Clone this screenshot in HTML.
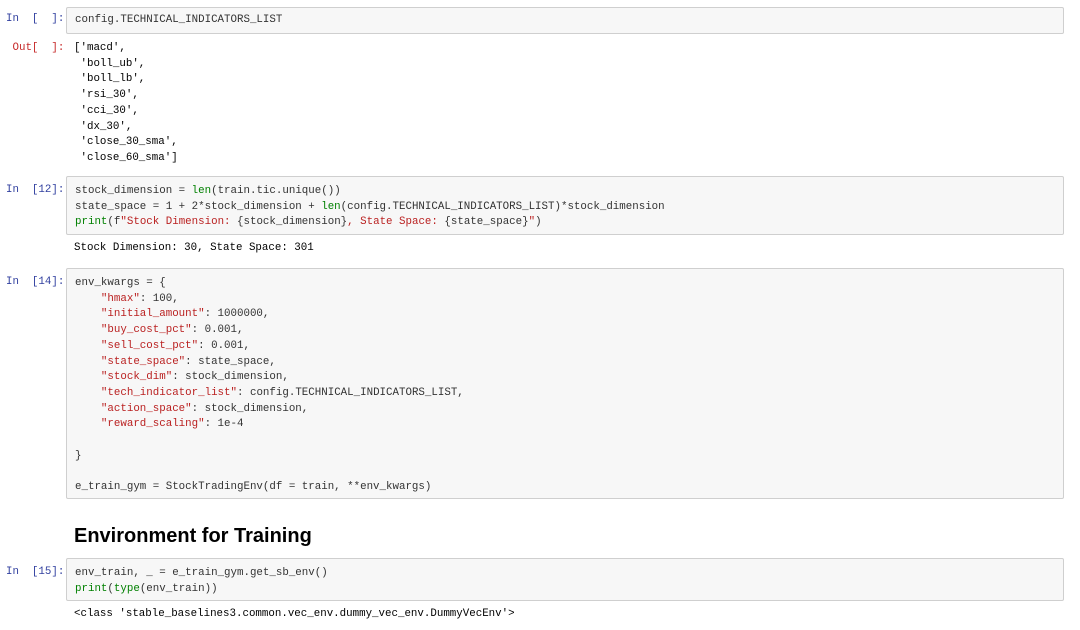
<!DOCTYPE html>
<html><head><meta charset="utf-8"><style>
body{margin:0;background:#fff;width:1080px;height:630px;overflow:hidden;position:relative;font-family:"Liberation Mono",monospace;font-size:10.8px;color:#333}
.p{position:absolute;left:6px;width:60px;color:#303f9f;white-space:pre;line-height:15.7px}
.o{color:#c62828}
.c{position:absolute;left:66px;width:998px;background:#f7f7f7;border:1px solid #cfcfcf;border-radius:2px;box-sizing:border-box;padding:7px 8px 5px;white-space:pre;line-height:15.7px}
.t{position:absolute;left:74px;white-space:pre;line-height:15.7px;color:#000}
.k{color:#008000}.s{color:#ba2121}
h2{position:absolute;left:74px;top:525px;margin:0;font:bold 20px "Liberation Sans",sans-serif;color:#000}
</style></head><body>
<div class="p" style="top:12px">In  [  ]:</div>
<div class="c" style="top:7px;height:27px;padding-top:5px">config.TECHNICAL_INDICATORS_LIST</div>
<div class="p o" style="top:41px"> Out[  ]:</div>
<div class="t" style="top:41px">['macd',
 'boll_ub',
 'boll_lb',
 'rsi_30',
 'cci_30',
 'dx_30',
 'close_30_sma',
 'close_60_sma']</div>
<div class="p" style="top:183px">In  [12]:</div>
<div class="c" style="top:176px;height:59px">stock_dimension = <span class="k">len</span>(train.tic.unique())
state_space = 1 + 2*stock_dimension + <span class="k">len</span>(config.TECHNICAL_INDICATORS_LIST)*stock_dimension
<span class="k">print</span>(f<span class="s">"Stock Dimension: </span>{stock_dimension}<span class="s">, State Space: </span>{state_space}<span class="s">"</span>)</div>
<div class="t" style="top:241px">Stock Dimension: 30, State Space: 301</div>
<div class="p" style="top:275px">In  [14]:</div>
<div class="c" style="top:268px;height:231px">env_kwargs = {
    <span class="s">"hmax"</span>: 100,
    <span class="s">"initial_amount"</span>: 1000000,
    <span class="s">"buy_cost_pct"</span>: 0.001,
    <span class="s">"sell_cost_pct"</span>: 0.001,
    <span class="s">"state_space"</span>: state_space,
    <span class="s">"stock_dim"</span>: stock_dimension,
    <span class="s">"tech_indicator_list"</span>: config.TECHNICAL_INDICATORS_LIST,
    <span class="s">"action_space"</span>: stock_dimension,
    <span class="s">"reward_scaling"</span>: 1e-4

}

e_train_gym = StockTradingEnv(df = train, **env_kwargs)</div>
<h2>Environment for Training</h2>
<div class="p" style="top:565px">In  [15]:</div>
<div class="c" style="top:558px;height:43px">env_train, _ = e_train_gym.get_sb_env()
<span class="k">print</span>(<span class="k">type</span>(env_train))</div>
<div class="t" style="top:607px">&lt;class 'stable_baselines3.common.vec_env.dummy_vec_env.DummyVecEnv'&gt;</div>
</body></html>
